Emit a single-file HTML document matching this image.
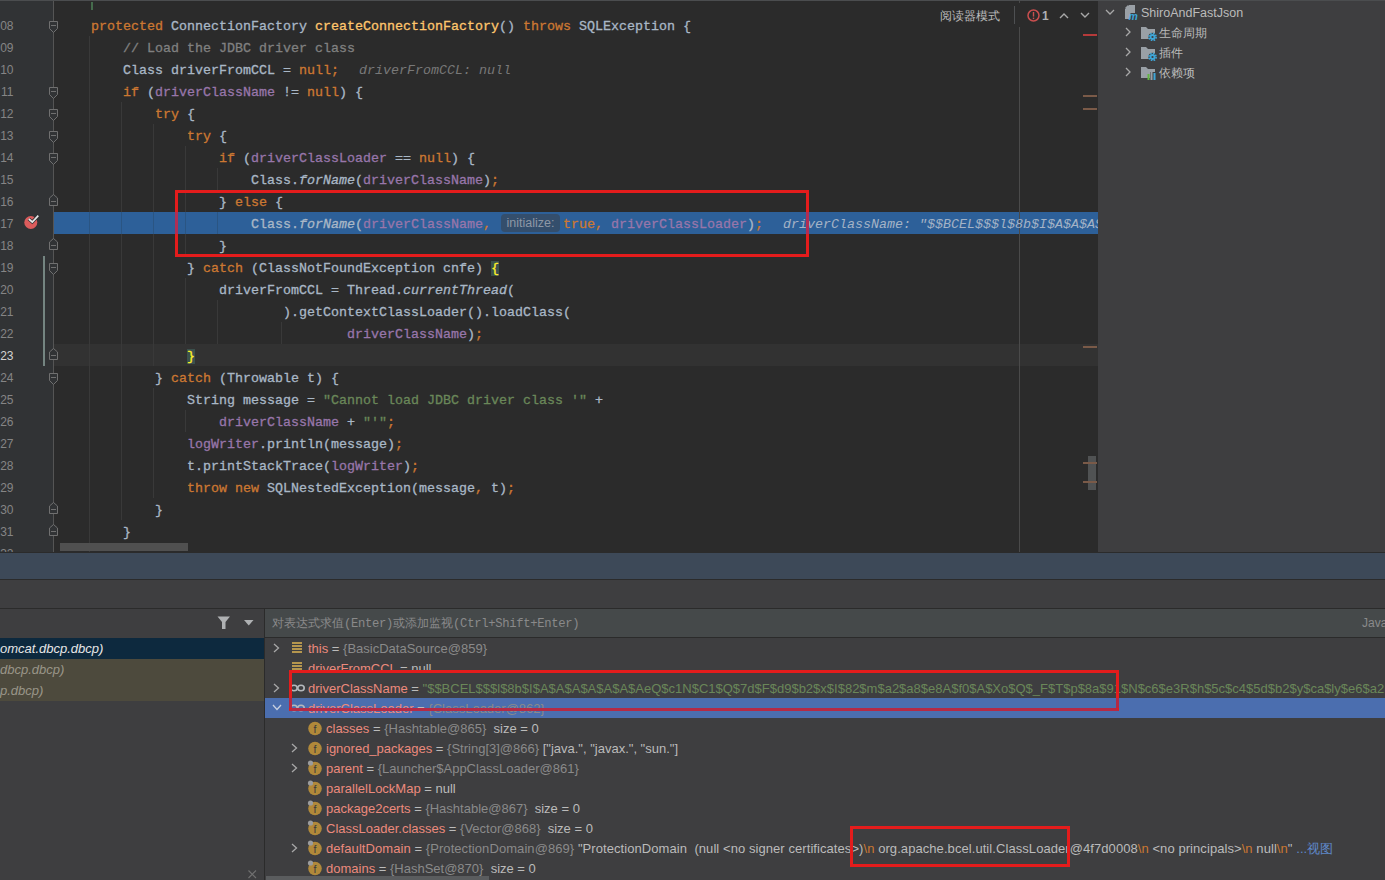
<!DOCTYPE html>
<html><head><meta charset="utf-8"><style>
*{margin:0;padding:0;box-sizing:border-box}
html,body{width:1385px;height:880px;overflow:hidden;background:#3E3E40;font-family:"Liberation Sans",sans-serif;position:relative}
.abs{position:absolute}
#editor{position:absolute;left:0;top:1px;width:1098px;height:551px;background:#2B2B2B;overflow:hidden}
#topb{position:absolute;left:0;top:0;width:1385px;height:1px;background:#4B4D4F}
#gutter{position:absolute;left:0;top:0;width:54px;height:551px;background:#313335}
#foldline{position:absolute;left:53px;top:0;width:1px;height:551px;background:#555555}
#curline{position:absolute;left:54px;width:1044px;height:22px;background:#323232;margin-top:-1px}
#execline{position:absolute;left:54px;width:1044px;height:22px;background:#2D6099;margin-top:-1px}
#margin{position:absolute;left:1019px;top:0;width:1px;height:551px;background:#4A4A4A}
.ig{position:absolute;width:1px;background:#393939;margin-top:-1px}
.ln{position:absolute;left:-20px;width:33.5px;text-align:right;font:12px/22px "Liberation Sans",sans-serif;margin-top:0px}
.cl{position:absolute;white-space:pre;-webkit-text-stroke:0.3px currentColor;font:13.33px/22px "Liberation Mono",monospace;margin-top:1px;color:#A9B7C6}
.inl{font-style:italic;-webkit-text-stroke:0}
.br{background:#3B514D}
.hint{position:absolute;width:59px;height:18px;text-align:center;border-radius:4px;background:#344E6C;color:#8E98A6;font:12.5px/18px "Liberation Sans",sans-serif;margin-top:-1px}
.vcs{position:absolute;left:43px;width:1.5px;background:#748581;margin-top:0px}
#hscroll{position:absolute;left:60px;top:542px;width:128px;height:8px;background:#505050}
.stripe{position:absolute;left:1083px;width:14px;height:2px;background:#7A5A48}
#thumb{position:absolute;left:1088px;top:455px;width:8px;height:34px;background:#505253}
#tbbg{position:absolute;left:930px;top:2px;width:160px;height:24px;background:#2B2B2B}
.cjk{position:absolute;font-size:12px;line-height:14px;color:#BBBBBB;white-space:pre}
.redbox{position:absolute;border:3px solid #E41C1C}
#maven{position:absolute;left:1098px;top:1px;width:287px;height:551px;background:#3E3E40}
.mt{position:absolute;font-size:12.5px;line-height:16px;color:#BBBBBB;white-space:nowrap}
#bar1{position:absolute;left:0;top:553px;width:1385px;height:26px;background:#3D4958}
#bar2{position:absolute;left:0;top:580px;width:1385px;height:28px;background:#3E3E40}
.hl{position:absolute;left:0;width:1385px;height:1px;background:#2B2B2B}
#frames{position:absolute;left:0;top:609px;width:264px;height:271px;background:#3E3E40}
#vsep{position:absolute;left:264px;top:609px;width:1px;height:271px;background:#2B2B2B}
#evalbar{position:absolute;left:265px;top:609px;width:1120px;height:28px;background:#45494A}
.fr{position:absolute;left:0;width:264px;height:21px;font-style:italic;font-size:13px;line-height:21px;white-space:nowrap;overflow:hidden}
.mono{font-family:"Liberation Mono",monospace;font-size:12.2px;letter-spacing:-0.3px;vertical-align:0.5px}
.vr{position:absolute;height:20px;font-size:13px;line-height:20px;white-space:pre}
</style></head><body>
<div id="editor">
<div id="gutter"></div><div id="foldline"></div>
<div id="curline" style="top:344px"></div>
<div id="execline" style="top:212px"></div>
<div id="margin"></div>
<div class="ig" style="left:89px;top:36px;height:528px"></div><div class="ig" style="left:121px;top:102px;height:418px"></div><div class="ig" style="left:153px;top:124px;height:242px"></div><div class="ig" style="left:153px;top:388px;height:110px"></div><div class="ig" style="left:185px;top:146px;height:110px"></div><div class="ig" style="left:185px;top:278px;height:66px"></div><div class="ig" style="left:217px;top:168px;height:22px"></div><div class="ig" style="left:217px;top:212px;height:22px"></div><div class="ig" style="left:217px;top:300px;height:44px"></div><div class="ig" style="left:185px;top:410px;height:22px"></div><div class="ig" style="left:281px;top:322px;height:22px"></div><div class="ig" style="left:89px;top:212px;height:22px;background:#2A5583"></div><div class="ig" style="left:121px;top:212px;height:22px;background:#2A5583"></div><div class="ig" style="left:153px;top:212px;height:22px;background:#2A5583"></div><div class="ig" style="left:185px;top:212px;height:22px;background:#2A5583"></div><div class="ig" style="left:217px;top:212px;height:22px;background:#2A5583"></div><div class="ln" style="top:14px;color:#858585">08</div><div class="ln" style="top:36px;color:#858585">09</div><div class="ln" style="top:58px;color:#858585">10</div><div class="ln" style="top:80px;color:#858585">11</div><div class="ln" style="top:102px;color:#858585">12</div><div class="ln" style="top:124px;color:#858585">13</div><div class="ln" style="top:146px;color:#858585">14</div><div class="ln" style="top:168px;color:#858585">15</div><div class="ln" style="top:190px;color:#858585">16</div><div class="ln" style="top:212px;color:#858585">17</div><div class="ln" style="top:234px;color:#858585">18</div><div class="ln" style="top:256px;color:#858585">19</div><div class="ln" style="top:278px;color:#858585">20</div><div class="ln" style="top:300px;color:#858585">21</div><div class="ln" style="top:322px;color:#858585">22</div><div class="ln" style="top:344px;color:#D2D2D2">23</div><div class="ln" style="top:366px;color:#858585">24</div><div class="ln" style="top:388px;color:#858585">25</div><div class="ln" style="top:410px;color:#858585">26</div><div class="ln" style="top:432px;color:#858585">27</div><div class="ln" style="top:454px;color:#858585">28</div><div class="ln" style="top:476px;color:#858585">29</div><div class="ln" style="top:498px;color:#858585">30</div><div class="ln" style="top:520px;color:#858585">31</div><div class="ln" style="top:542px;color:#858585">32</div><svg class="abs" style="left:49px;top:20px" width="10" height="12"><path d="M0.5 0.5H8.5V7.5L4.5 11.5L0.5 7.5Z" fill="#313335" stroke="#707070"/><path d="M2 4.5H7" stroke="#707070"/></svg><svg class="abs" style="left:49px;top:86px" width="10" height="12"><path d="M0.5 0.5H8.5V7.5L4.5 11.5L0.5 7.5Z" fill="#313335" stroke="#707070"/><path d="M2 4.5H7" stroke="#707070"/></svg><svg class="abs" style="left:49px;top:108px" width="10" height="12"><path d="M0.5 0.5H8.5V7.5L4.5 11.5L0.5 7.5Z" fill="#313335" stroke="#707070"/><path d="M2 4.5H7" stroke="#707070"/></svg><svg class="abs" style="left:49px;top:130px" width="10" height="12"><path d="M0.5 0.5H8.5V7.5L4.5 11.5L0.5 7.5Z" fill="#313335" stroke="#707070"/><path d="M2 4.5H7" stroke="#707070"/></svg><svg class="abs" style="left:49px;top:152px" width="10" height="12"><path d="M0.5 0.5H8.5V7.5L4.5 11.5L0.5 7.5Z" fill="#313335" stroke="#707070"/><path d="M2 4.5H7" stroke="#707070"/></svg><svg class="abs" style="left:49px;top:193px" width="10" height="12"><path d="M0.5 11.5H8.5V4L4.5 0.5L0.5 4Z" fill="#313335" stroke="#707070"/><path d="M2 7.5H7" stroke="#707070"/></svg><svg class="abs" style="left:49px;top:237px" width="10" height="12"><path d="M0.5 11.5H8.5V4L4.5 0.5L0.5 4Z" fill="#313335" stroke="#707070"/><path d="M2 7.5H7" stroke="#707070"/></svg><svg class="abs" style="left:49px;top:262px" width="10" height="12"><path d="M0.5 0.5H8.5V7.5L4.5 11.5L0.5 7.5Z" fill="#313335" stroke="#707070"/><path d="M2 4.5H7" stroke="#707070"/></svg><svg class="abs" style="left:49px;top:347px" width="10" height="12"><path d="M0.5 11.5H8.5V4L4.5 0.5L0.5 4Z" fill="#313335" stroke="#707070"/><path d="M2 7.5H7" stroke="#707070"/></svg><svg class="abs" style="left:49px;top:372px" width="10" height="12"><path d="M0.5 0.5H8.5V7.5L4.5 11.5L0.5 7.5Z" fill="#313335" stroke="#707070"/><path d="M2 4.5H7" stroke="#707070"/></svg><svg class="abs" style="left:49px;top:501px" width="10" height="12"><path d="M0.5 11.5H8.5V4L4.5 0.5L0.5 4Z" fill="#313335" stroke="#707070"/><path d="M2 7.5H7" stroke="#707070"/></svg><svg class="abs" style="left:49px;top:523px" width="10" height="12"><path d="M0.5 11.5H8.5V4L4.5 0.5L0.5 4Z" fill="#313335" stroke="#707070"/><path d="M2 7.5H7" stroke="#707070"/></svg><div class="cl" style="top:14px;left:91px"><span style="color:#CC7832">protected</span><span style="color:#A9B7C6"> ConnectionFactory </span><span style="color:#FFC66D">createConnectionFactory</span><span style="color:#A9B7C6">() </span><span style="color:#CC7832">throws</span><span style="color:#A9B7C6"> SQLException {</span></div><div class="cl" style="top:36px;left:123px"><span style="color:#808080">// Load the JDBC driver class</span></div><div class="cl" style="top:58px;left:123px"><span style="color:#A9B7C6">Class driverFromCCL = </span><span style="color:#CC7832">null</span><span style="color:#CC7832">;</span></div><div class="cl" style="top:80px;left:123px"><span style="color:#CC7832">if</span><span style="color:#A9B7C6"> (</span><span style="color:#9876AA">driverClassName</span><span style="color:#A9B7C6"> != </span><span style="color:#CC7832">null</span><span style="color:#A9B7C6">) {</span></div><div class="cl" style="top:102px;left:155px"><span style="color:#CC7832">try</span><span style="color:#A9B7C6"> {</span></div><div class="cl" style="top:124px;left:187px"><span style="color:#CC7832">try</span><span style="color:#A9B7C6"> {</span></div><div class="cl" style="top:146px;left:219px"><span style="color:#CC7832">if</span><span style="color:#A9B7C6"> (</span><span style="color:#9876AA">driverClassLoader</span><span style="color:#A9B7C6"> == </span><span style="color:#CC7832">null</span><span style="color:#A9B7C6">) {</span></div><div class="cl" style="top:168px;left:251px"><span style="color:#A9B7C6">Class.</span><span style="color:#A9B7C6;font-style:italic">forName</span><span style="color:#A9B7C6">(</span><span style="color:#9876AA">driverClassName</span><span style="color:#A9B7C6">)</span><span style="color:#CC7832">;</span></div><div class="cl" style="top:190px;left:219px"><span style="color:#A9B7C6">} </span><span style="color:#CC7832">else</span><span style="color:#A9B7C6"> {</span></div><div class="cl" style="top:234px;left:219px"><span style="color:#A9B7C6">}</span></div><div class="cl" style="top:256px;left:187px"><span style="color:#A9B7C6">} </span><span style="color:#CC7832">catch</span><span style="color:#A9B7C6"> (ClassNotFoundException cnfe) </span><span class="br" style="color:#FFEF28">{</span></div><div class="cl" style="top:278px;left:219px"><span style="color:#A9B7C6">driverFromCCL = Thread.</span><span style="color:#A9B7C6;font-style:italic">currentThread</span><span style="color:#A9B7C6">(</span></div><div class="cl" style="top:300px;left:283px"><span style="color:#A9B7C6">).getContextClassLoader().loadClass(</span></div><div class="cl" style="top:322px;left:347px"><span style="color:#9876AA">driverClassName</span><span style="color:#A9B7C6">)</span><span style="color:#CC7832">;</span></div><div class="cl" style="top:344px;left:187px"><span class="br" style="color:#FFEF28">}</span></div><div class="cl" style="top:366px;left:155px"><span style="color:#A9B7C6">} </span><span style="color:#CC7832">catch</span><span style="color:#A9B7C6"> (Throwable t) {</span></div><div class="cl" style="top:388px;left:187px"><span style="color:#A9B7C6">String message = </span><span style="color:#6A8759">&quot;Cannot load JDBC driver class &#x27;&quot;</span><span style="color:#A9B7C6"> +</span></div><div class="cl" style="top:410px;left:219px"><span style="color:#9876AA">driverClassName</span><span style="color:#A9B7C6"> + </span><span style="color:#6A8759">&quot;&#x27;&quot;</span><span style="color:#CC7832">;</span></div><div class="cl" style="top:432px;left:187px"><span style="color:#9876AA">logWriter</span><span style="color:#A9B7C6">.println(message)</span><span style="color:#CC7832">;</span></div><div class="cl" style="top:454px;left:187px"><span style="color:#A9B7C6">t.printStackTrace(</span><span style="color:#9876AA">logWriter</span><span style="color:#A9B7C6">)</span><span style="color:#CC7832">;</span></div><div class="cl" style="top:476px;left:187px"><span style="color:#CC7832">throw</span><span style="color:#A9B7C6"> </span><span style="color:#CC7832">new</span><span style="color:#A9B7C6"> SQLNestedException(message</span><span style="color:#CC7832">,</span><span style="color:#A9B7C6"> t)</span><span style="color:#CC7832">;</span></div><div class="cl" style="top:498px;left:155px"><span style="color:#A9B7C6">}</span></div><div class="cl" style="top:520px;left:123px"><span style="color:#A9B7C6">}</span></div><div class="cl" style="top:212px;left:251px"><span style="color:#A9B7C6">Class.</span><span style="color:#A9B7C6;font-style:italic">forName</span><span style="color:#A9B7C6">(</span><span style="color:#9876AA">driverClassName</span><span style="color:#CC7832">,</span></div><div class="hint" style="top:214px;left:501px">initialize:</div><div class="cl" style="top:212px;left:563px"><span style="color:#CC7832">true</span><span style="color:#CC7832">,</span><span style="color:#A9B7C6"> </span><span style="color:#9876AA">driverClassLoader</span><span style="color:#A9B7C6">)</span><span style="color:#CC7832">;</span></div><div class="cl inl" style="top:212px;left:783px;color:#A4B3C6">driverClassName: "$$BCEL$$$l$8b$I$A$A$A$A$A$A$AeQ$c1N$C1$Q$7d$F$d9$b2$x$I$82$m</div><div class="cl inl" style="top:58px;left:359px;color:#787878">driverFromCCL: null</div>
<svg class="abs" style="left:22px;top:212px" width="18" height="18"><circle cx="8.8" cy="9.5" r="6.5" fill="#DB5C5C"/><path d="M6.8 6L10.3 9L16.3 2.6" fill="none" stroke="#313335" stroke-width="3.4"/><path d="M6.8 6L10.3 9L16.3 2.6" fill="none" stroke="#E6E6E6" stroke-width="1.7"/></svg>
<div class="vcs" style="top:255px;height:110px"></div>
<div class="abs" style="left:91px;top:1px;width:2px;height:8px;background:#456B4C"></div>
<div id="hscroll"></div>
<div class="stripe" style="top:33px;background:#B53A3A"></div>
<div class="stripe" style="top:94px"></div>
<div class="stripe" style="top:107px"></div>
<div class="stripe" style="top:345px"></div>
<div id="thumb"></div>
<div class="stripe" style="top:461px"></div>
<div class="stripe" style="top:480px"></div>
<div id="tbbg"></div>
<div class="cjk" style="left:940px;top:8px">阅读器模式</div>
<div class="abs" style="left:1014px;top:5px;width:1px;height:18px;background:#4E5052"></div>
<svg class="abs" style="left:1027px;top:8px" width="13" height="13"><circle cx="6.5" cy="6.5" r="5.5" fill="none" stroke="#C94F4F" stroke-width="1.5"/><rect x="5.8" y="3" width="1.4" height="4.6" fill="#C94F4F"/><rect x="5.8" y="8.6" width="1.4" height="1.5" fill="#C94F4F"/></svg>
<div class="abs" style="left:1042px;top:8px;font-size:12px;line-height:14px;color:#AFB1B3;font-weight:bold">1</div>
<svg class="abs" style="left:1059px;top:11px" width="10" height="7"><path d="M1 6L5 2L9 6" fill="none" stroke="#A8A8A8" stroke-width="1.4"/></svg>
<svg class="abs" style="left:1080px;top:11px" width="10" height="7"><path d="M1 1L5 5L9 1" fill="none" stroke="#A8A8A8" stroke-width="1.4"/></svg>
</div>
<div id="topb"></div>
<div id="maven"></div><svg class="abs" style="left:1105px;top:9px" width="10" height="6"><path d="M1 1L5 5L9 1" fill="none" stroke="#A8A8A8" stroke-width="1.3"/></svg><svg class="abs" style="left:1125px;top:5px" width="15" height="16"><path d="M4 0H10V8H5.5V14H0V4Z" fill="#9AA0A6"/><path d="M0 3L3 0V3Z" fill="#9AA0A6"/><text x="3.5" y="15" font-family="Liberation Sans" font-style="italic" font-weight="bold" font-size="10.5" fill="#3FA6D8">m</text></svg><div class="mt" style="left:1141px;top:5px">ShiroAndFastJson</div><svg class="abs" style="left:1125px;top:27px" width="6" height="10"><path d="M1 1L5 5L1 9" fill="none" stroke="#A8A8A8" stroke-width="1.3"/></svg><svg class="abs" style="left:1141px;top:26px" width="16" height="15"><path d="M0 1H5L7 3H14V8H9V13H0Z" fill="#9AA0A6"/><circle cx="11.5" cy="11" r="4.2" fill="#3E3E40"/><circle cx="11.5" cy="11" r="2.9" fill="#3FA6D8"/><circle cx="11.5" cy="11" r="3.6" fill="none" stroke="#3FA6D8" stroke-width="1.6" stroke-dasharray="1.6 1.22"/><circle cx="11.5" cy="11" r="1.1" fill="#3E3E40"/></svg><div class="mt" style="left:1159px;top:25px;font-size:12px">生命周期</div><svg class="abs" style="left:1125px;top:47px" width="6" height="10"><path d="M1 1L5 5L1 9" fill="none" stroke="#A8A8A8" stroke-width="1.3"/></svg><svg class="abs" style="left:1141px;top:46px" width="16" height="15"><path d="M0 1H5L7 3H14V8H9V13H0Z" fill="#9AA0A6"/><circle cx="11.5" cy="11" r="4.2" fill="#3E3E40"/><circle cx="11.5" cy="11" r="2.9" fill="#3FA6D8"/><circle cx="11.5" cy="11" r="3.6" fill="none" stroke="#3FA6D8" stroke-width="1.6" stroke-dasharray="1.6 1.22"/><circle cx="11.5" cy="11" r="1.1" fill="#3E3E40"/></svg><div class="mt" style="left:1159px;top:45px;font-size:12px">插件</div><svg class="abs" style="left:1125px;top:67px" width="6" height="10"><path d="M1 1L5 5L1 9" fill="none" stroke="#A8A8A8" stroke-width="1.3"/></svg><svg class="abs" style="left:1141px;top:66px" width="16" height="15"><path d="M0 1H5L7 3H14V6H9V12H0Z" fill="#9AA0A6"/><rect x="6.5" y="8" width="2" height="6" fill="#62B543"/><rect x="9.5" y="5" width="2" height="9" fill="#9AA0A6"/><rect x="12.5" y="7" width="2" height="7" fill="#3FA6D8"/></svg><div class="mt" style="left:1159px;top:65px;font-size:12px">依赖项</div>
<div class="hl" style="top:552px"></div>
<div id="bar1"></div>
<div class="hl" style="top:579px"></div>
<div id="bar2"></div>
<div class="hl" style="top:608px"></div>
<div id="frames">
  <svg class="abs" style="left:217px;top:7px" width="14" height="14"><path d="M0.5 0.5H13L8.5 6V13H5V6Z" fill="#AFB1B3"/></svg>
  <svg class="abs" style="left:244px;top:11px" width="10" height="6"><path d="M0 0H9.5L4.75 5.5Z" fill="#AFB1B3"/></svg>
  <div class="fr" style="top:29px;background:#0D293E;color:#E6E6E6">omcat.dbcp.dbcp)</div>
  <div class="fr" style="top:50px;background:#4D4A3D;color:#999588">dbcp.dbcp)</div>
  <div class="fr" style="top:71px;background:#4D4A3D;color:#999588">p.dbcp)</div>
  <svg class="abs" style="left:248px;top:261px" width="9" height="9"><path d="M0.5 0.5L8 8M8 0.5L0.5 8" stroke="#707070" stroke-width="1.1"/></svg>
</div>
<div id="vsep"></div>
<div id="evalbar"><div class="cjk" style="left:7px;top:7px;color:#8A8A8A">对表达式求值<span class="mono">(Enter)</span>或添加监视<span class="mono">(Ctrl+Shift+Enter)</span></div><div class="abs" style="left:1097px;top:7px;font-size:12px;line-height:14px;color:#8A8A8A">Java</div></div>
<div class="hl" style="top:637px;left:265px"></div>
<svg class="abs" style="left:273px;top:643px" width="7" height="10"><path d="M1 1L5.5 5L1 9" fill="none" stroke="#A8A8A8" stroke-width="1.3"/></svg><svg class="abs" style="left:292px;top:642px" width="10" height="11"><g fill="#B5964E"><rect x="0" y="0" width="10" height="2"/><rect x="0" y="3" width="10" height="2"/><rect x="0" y="6" width="10" height="2"/><rect x="0" y="9" width="10" height="2"/></g></svg><div class="vr" style="left:308px;top:639px"><span style="color:#EC8A7D">this</span><span style="color:#BBBBBB"> = </span><span style="color:#8A8A8A">{BasicDataSource@859}</span></div><svg class="abs" style="left:292px;top:662px" width="10" height="11"><g fill="#B5964E"><rect x="0" y="0" width="10" height="2"/><rect x="0" y="3" width="10" height="2"/><rect x="0" y="6" width="10" height="2"/><rect x="0" y="9" width="10" height="2"/></g></svg><div class="vr" style="left:308px;top:659px"><span style="color:#EC8A7D">driverFromCCL</span><span style="color:#BBBBBB"> = </span><span style="color:#BBBBBB">null</span></div><svg class="abs" style="left:273px;top:683px" width="7" height="10"><path d="M1 1L5.5 5L1 9" fill="none" stroke="#A8A8A8" stroke-width="1.3"/></svg><svg class="abs" style="left:290px;top:684px" width="15" height="8"><g fill="none" stroke="#B4B8BC" stroke-width="1.6"><ellipse cx="4" cy="4" rx="3.2" ry="2.8"/><ellipse cx="11" cy="4" rx="3.2" ry="2.8"/></g></svg><div class="vr" style="left:308px;top:679px"><span style="color:#EC8A7D">driverClassName</span><span style="color:#BBBBBB"> = </span><span style="color:#6A8759">&quot;$$BCEL$$$l$8b$I$A$A$A$A$A$A$AeQ$c1N$C1$Q$7d$F$d9$b2$x$I$82$m$a2$a8$e8A$f0$A$Xo$Q$_F$T$p$8a$91$N$c6$e3R$h$5c$c4$5d$b2$y$ca$ly$e6$a2F$T$b</span></div><div class="abs" style="left:265px;top:698px;width:1120px;height:20px;background:#4B6EAF"></div><svg class="abs" style="left:272px;top:704px" width="10" height="7"><path d="M1 1L5 5.5L9 1" fill="none" stroke="#C8D0E0" stroke-width="1.3"/></svg><svg class="abs" style="left:290px;top:704px" width="15" height="8"><g fill="none" stroke="#B4B8BC" stroke-width="1.6"><ellipse cx="4" cy="4" rx="3.2" ry="2.8"/><ellipse cx="11" cy="4" rx="3.2" ry="2.8"/></g></svg><div class="vr" style="left:308px;top:699px"><span style="color:#EC8A7D">driverClassLoader</span><span style="color:#BBBBBB"> = </span><span style="color:#8A8A8A">{ClassLoader@862}</span></div><svg class="abs" style="left:307px;top:720px" width="16" height="16"><circle cx="8" cy="8.5" r="6.8" fill="#B0893A"/><text x="8" y="12.5" text-anchor="middle" font-family="Liberation Sans" font-size="10.5" fill="#3A3A3A">f</text></svg><div class="vr" style="left:326px;top:719px"><span style="color:#EC8A7D">classes</span><span style="color:#BBBBBB"> = </span><span style="color:#8A8A8A">{Hashtable@865}</span><span style="color:#BBBBBB">  size = 0</span></div><svg class="abs" style="left:291px;top:743px" width="7" height="10"><path d="M1 1L5.5 5L1 9" fill="none" stroke="#A8A8A8" stroke-width="1.3"/></svg><svg class="abs" style="left:307px;top:740px" width="16" height="16"><circle cx="8" cy="8.5" r="6.8" fill="#B0893A"/><text x="8" y="12.5" text-anchor="middle" font-family="Liberation Sans" font-size="10.5" fill="#3A3A3A">f</text></svg><div class="vr" style="left:326px;top:739px"><span style="color:#EC8A7D">ignored_packages</span><span style="color:#BBBBBB"> = </span><span style="color:#8A8A8A">{String[3]@866}</span><span style="color:#BBBBBB"> [&quot;java.&quot;, &quot;javax.&quot;, &quot;sun.&quot;]</span></div><svg class="abs" style="left:291px;top:763px" width="7" height="10"><path d="M1 1L5.5 5L1 9" fill="none" stroke="#A8A8A8" stroke-width="1.3"/></svg><svg class="abs" style="left:307px;top:760px" width="16" height="16"><circle cx="8" cy="8.5" r="6.8" fill="#B0893A"/><circle cx="3.5" cy="3" r="2.6" fill="#9A9C9E"/><text x="8" y="12.5" text-anchor="middle" font-family="Liberation Sans" font-size="10.5" fill="#3A3A3A">f</text></svg><div class="vr" style="left:326px;top:759px"><span style="color:#EC8A7D">parent</span><span style="color:#BBBBBB"> = </span><span style="color:#8A8A8A">{Launcher$AppClassLoader@861}</span></div><svg class="abs" style="left:307px;top:780px" width="16" height="16"><circle cx="8" cy="8.5" r="6.8" fill="#B0893A"/><circle cx="3.5" cy="3" r="2.6" fill="#9A9C9E"/><text x="8" y="12.5" text-anchor="middle" font-family="Liberation Sans" font-size="10.5" fill="#3A3A3A">f</text></svg><div class="vr" style="left:326px;top:779px"><span style="color:#EC8A7D">parallelLockMap</span><span style="color:#BBBBBB"> = </span><span style="color:#BBBBBB">null</span></div><svg class="abs" style="left:307px;top:800px" width="16" height="16"><circle cx="8" cy="8.5" r="6.8" fill="#B0893A"/><circle cx="3.5" cy="3" r="2.6" fill="#9A9C9E"/><text x="8" y="12.5" text-anchor="middle" font-family="Liberation Sans" font-size="10.5" fill="#3A3A3A">f</text></svg><div class="vr" style="left:326px;top:799px"><span style="color:#EC8A7D">package2certs</span><span style="color:#BBBBBB"> = </span><span style="color:#8A8A8A">{Hashtable@867}</span><span style="color:#BBBBBB">  size = 0</span></div><svg class="abs" style="left:307px;top:820px" width="16" height="16"><circle cx="8" cy="8.5" r="6.8" fill="#B0893A"/><circle cx="3.5" cy="3" r="2.6" fill="#9A9C9E"/><text x="8" y="12.5" text-anchor="middle" font-family="Liberation Sans" font-size="10.5" fill="#3A3A3A">f</text></svg><div class="vr" style="left:326px;top:819px"><span style="color:#EC8A7D">ClassLoader.classes</span><span style="color:#BBBBBB"> = </span><span style="color:#8A8A8A">{Vector@868}</span><span style="color:#BBBBBB">  size = 0</span></div><svg class="abs" style="left:291px;top:843px" width="7" height="10"><path d="M1 1L5.5 5L1 9" fill="none" stroke="#A8A8A8" stroke-width="1.3"/></svg><svg class="abs" style="left:307px;top:840px" width="16" height="16"><circle cx="8" cy="8.5" r="6.8" fill="#B0893A"/><circle cx="3.5" cy="3" r="2.6" fill="#9A9C9E"/><text x="8" y="12.5" text-anchor="middle" font-family="Liberation Sans" font-size="10.5" fill="#3A3A3A">f</text></svg><div class="vr" style="left:326px;top:839px;letter-spacing:0.07px"><span style="color:#EC8A7D">defaultDomain</span><span style="color:#BBBBBB"> = </span><span style="color:#8A8A8A">{ProtectionDomain@869}</span><span style="color:#BBBBBB"> &quot;ProtectionDomain  (null &lt;no signer certificates&gt;)</span><span style="color:#CC7832">\n</span><span style="color:#BBBBBB"> org.apache.bcel.util.ClassLoader@4f7d0008</span><span style="color:#CC7832">\n</span><span style="color:#BBBBBB"> &lt;no principals&gt;</span><span style="color:#CC7832">\n</span><span style="color:#BBBBBB"> null</span><span style="color:#CC7832">\n</span><span style="color:#BBBBBB">&quot;</span><span style="color:#5E88C9"> ...视图</span></div><svg class="abs" style="left:307px;top:860px" width="16" height="16"><circle cx="8" cy="8.5" r="6.8" fill="#B0893A"/><circle cx="3.5" cy="3" r="2.6" fill="#9A9C9E"/><text x="8" y="12.5" text-anchor="middle" font-family="Liberation Sans" font-size="10.5" fill="#3A3A3A">f</text></svg><div class="vr" style="left:326px;top:859px"><span style="color:#EC8A7D">domains</span><span style="color:#BBBBBB"> = </span><span style="color:#8A8A8A">{HashSet@870}</span><span style="color:#BBBBBB">  size = 0</span></div>
<div class="abs" style="left:266px;top:876px;width:223px;height:4px;background:#5A5C5E"></div>
<div class="redbox" style="left:175px;top:190px;width:634px;height:67px"></div><div class="abs" style="left:175px;top:212px;width:3px;height:22px;background:#B02E55"></div><div class="abs" style="left:806px;top:212px;width:3px;height:22px;background:#B02E55"></div>
<div class="redbox" style="left:289px;top:670px;width:830px;height:41px;border-bottom-color:#B42A45"></div><div class="abs" style="left:289px;top:698px;width:3px;height:10px;background:#B42A45"></div><div class="abs" style="left:1116px;top:698px;width:3px;height:10px;background:#B42A45"></div>
<div class="redbox" style="left:850px;top:826px;width:220px;height:41px"></div>
</body></html>
